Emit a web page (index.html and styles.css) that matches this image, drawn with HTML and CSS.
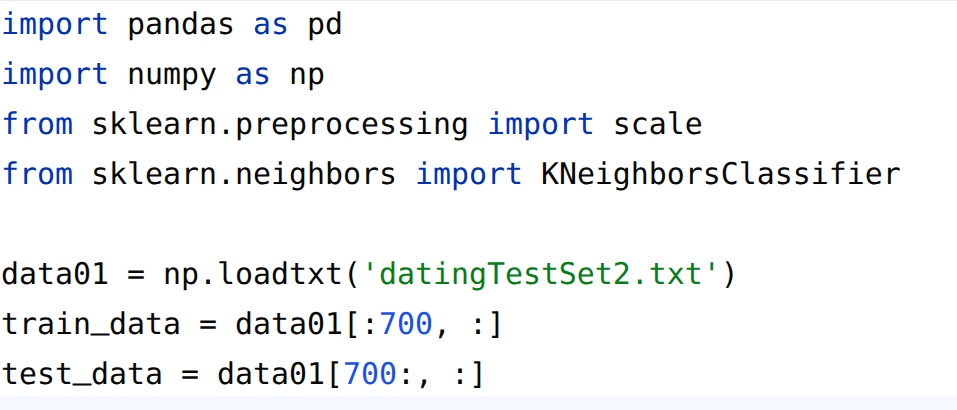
FILE: index.html
```html
<!DOCTYPE html>
<html>
<head>
<meta charset="utf-8">
<link rel="stylesheet" href="styles.css">
</head>
<body>
<div class="editor">
  <div class="code">
    <div class="line"><span class="kw">import</span> pandas <span class="kw">as</span> pd</div>
    <div class="line"><span class="kw">import</span> numpy <span class="kw">as</span> np</div>
    <div class="line"><span class="kw">from</span> sklearn.preprocessing <span class="kw">import</span> scale</div>
    <div class="line"><span class="kw">from</span> sklearn.neighbors <span class="kw">import</span> KNeighborsClassifier</div>
    <div class="line"> </div>
    <div class="line">data01 = np.loadtxt(<span class="str">'datingTestSet2.txt'</span>)</div>
    <div class="line">train<span class="us">_</span>data = data01[:<span class="num">700</span>, :]</div>
    <div class="line">test<span class="us">_</span>data = data01[<span class="num">700</span>:, :]</div>
  </div>
  <div class="current"></div>
</div>
</body>
</html>
```
FILE: styles.css
```css
html, body {
  margin: 0;
  padding: 0;
  background: #ffffff;
  overflow: hidden;
}
.editor {
  width: 957px;
  height: 410px;
  border-top: 1px solid #ebecf0;
  box-sizing: border-box;
  display: flex;
  flex-direction: column;
}
.code {
  padding-left: 1px;
  font-family: "DejaVu Sans Mono", monospace;
  font-size: 29.9px;
  color: #080808;
  margin-top: -1px;
  text-rendering: geometricPrecision;
}
.line {
  line-height: 50px;
  min-height: 50px;
  white-space: pre;
}
.us {
  display: inline-block;
  transform: translateY(-6px);
  -webkit-text-stroke: 0.9px currentColor;
}
.kw { color: #0033b3; }
.str { color: #067d17; }
.num { color: #1750eb; }
.current {
  margin-top: -4px;
  flex: 1;
  background: #f5f8fe;
}
```
